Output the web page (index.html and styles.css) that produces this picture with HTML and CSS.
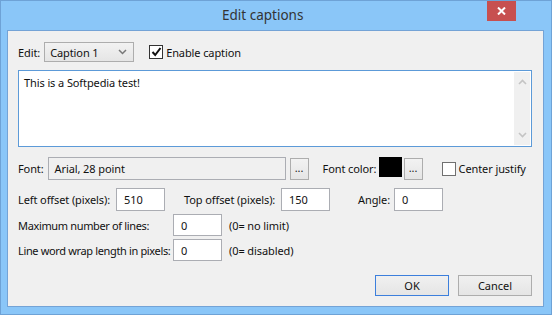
FILE: index.html
```html
<!DOCTYPE html>
<html lang="en">
<head>
  <meta charset="UTF-8">
  <title>Edit captions</title>
  <link rel="stylesheet" href="styles.css">
</head>
<body>
  <div class="window">
    <div class="titlebar">
      <span class="title">Edit captions</span>
      <span class="close">
        <svg width="9" height="8" viewBox="0 0 9 8"><path d="M1 0.5 L8 7.5 M8 0.5 L1 7.5" stroke="#fff" stroke-width="2"/></svg>
      </span>
    </div>

    <div class="client">
      <div class="row row-edit">
        <span class="lbl">Edit:</span>
        <div class="select">
          <span>Caption 1</span>
          <svg width="9" height="6" viewBox="0 0 9 6"><path d="M1 1 L4.5 4.5 L8 1" fill="none" stroke="#777" stroke-width="1.5"/></svg>
        </div>
        <span class="check checked">
          <svg width="11" height="10" viewBox="0 0 11 10"><path d="M1.5 5 L4.2 8 L9.5 1" fill="none" stroke="#111" stroke-width="2"/></svg>
        </span>
        <span class="lbl">Enable caption</span>
      </div>

      <div class="memo">
        <div class="memo-text">This is a Softpedia test!</div>
        <div class="scroll">
          <svg width="9" height="6" viewBox="0 0 9 6"><path d="M1 5 L4.5 1.5 L8 5" fill="none" stroke="#c4c4c4" stroke-width="1.6"/></svg>
          <svg width="9" height="6" viewBox="0 0 9 6"><path d="M1 1 L4.5 4.5 L8 1" fill="none" stroke="#c4c4c4" stroke-width="1.6"/></svg>
        </div>
      </div>

      <div class="row row-font">
        <span class="lbl">Font:</span>
        <div class="field readonly font-field">Arial, 28 point</div>
        <button class="dots">...</button>
        <span class="lbl color-lbl">Font color:</span>
        <span class="swatch"></span>
        <button class="dots">...</button>
        <span class="check unchecked"></span>
        <span class="lbl">Center justify</span>
      </div>

      <div class="row row-offset">
        <span class="lbl left-lbl">Left offset (pixels):</span>
        <div class="field num">510</div>
        <span class="lbl top-lbl">Top offset (pixels):</span>
        <div class="field num">150</div>
        <span class="lbl angle-lbl">Angle:</span>
        <div class="field num">0</div>
      </div>

      <div class="row row-lines">
        <span class="lbl wide">Maximum number of lines:</span>
        <div class="field num">0</div>
        <span class="lbl note">(0= no limit)</span>
      </div>

      <div class="row row-wrap">
        <span class="lbl wide">Line word wrap length in pixels:</span>
        <div class="field num">0</div>
        <span class="lbl note">(0= disabled)</span>
      </div>

      <div class="buttons">
        <button class="btn default">OK</button>
        <button class="btn">Cancel</button>
      </div>
    </div>
  </div>
</body>
</html>
```

FILE: styles.css
```css
body { margin: 0; background: #fff; font-family: "Noto Sans", "Open Sans", sans-serif; font-size: 11px; letter-spacing: -0.1px; color: #111; }
.window { width: 552px; height: 315px; box-sizing: border-box; background: #8ac6f8; border: 1px solid #6ea2d6; display: flex; flex-direction: column; }
.titlebar { height: 29px; display: flex; align-items: flex-start; }
.title { margin: 5px 0 0 221px; font-size: 13.5px; letter-spacing: 0; color: #333; }
.close { margin-left: auto; margin-right: 35px; width: 29px; height: 20px; background: #c75050; display: flex; align-items: center; justify-content: center; }

.client { flex: 1; margin: 0 7px 7px 6px; background: #f0f0f0; border: 1px solid #74a3d6; padding: 11px 0 0 10px; }
.row { display: flex; align-items: center; }
.lbl { white-space: nowrap; }

.row-edit { height: 20px; }
.select { margin-left: 4px; height: 18px; border: 1px solid #adadad; background: linear-gradient(#f2f2f2, #e5e5e5); display: flex; align-items: center; justify-content: space-between; padding: 0 6px 0 5px; width: 77px; }
.check { width: 12px; height: 12px; border: 1px solid #333; background: #fff; display: flex; align-items: center; justify-content: center; margin-right: 3px; }
.row-edit .check { margin-left: 15px; }
.unchecked { border-color: #707070; margin-left: 19px; }

.memo { margin-top: 8px; width: 512px; height: 75px; border: 1px solid #5c9ad8; background: #fff; display: flex; }
.memo-text { flex: 1; padding: 4px 5px; }
.scroll { width: 16px; margin: 1px 1px 1px 0; background: #f0f0f0; display: flex; flex-direction: column; justify-content: space-between; align-items: center; padding: 7px 0; box-sizing: border-box; }

.row-font { margin-top: 10px; height: 23px; }
.field { border: 1px solid #abadb3; background: #fff; display: flex; align-items: center; padding-left: 7px; box-sizing: border-box; height: 23px; }
.font-field { margin-left: 4px; width: 238px; padding-left: 6px; }
.readonly { background: #f0f0f0; }
.dots { margin-left: 4px; width: 19px; height: 22px; border: 1px solid #adadad; background: linear-gradient(#f2f2f2, #e5e5e5); font: inherit; padding: 0 0 4px; display: flex; align-items: flex-end; justify-content: center; color: #222; }
.color-lbl { margin-left: 14px; width: 52px; }
.swatch { margin-left: 4px; width: 23px; height: 20px; background: #000; align-self: flex-start; }
.swatch + .dots { margin-left: 2px; }

.row-offset { margin-top: 8px; }
.left-lbl { width: 94px; }
.num { width: 49px; }
.row-offset .num { margin-left: 4px; }
.top-lbl { margin-left: 19px; width: 93px; }
.angle-lbl { margin-left: 28px; width: 32px; }

.row-lines { margin-top: 3px; height: 22px; }
.row-wrap { margin-top: 3px; height: 22px; }
.wide { width: 155px; letter-spacing: -0.35px; }
.row-lines .field, .row-wrap .field { height: 22px; }
.note { margin-left: 7px; }

.buttons { display: flex; justify-content: flex-end; gap: 9px; margin: 14px 11px 0 0; }
.btn { width: 74px; height: 21px; font: inherit; color: #111; border: 1px solid #adadad; background: linear-gradient(#f0f0f0, #e5e5e5); padding: 0; }
.btn.default { border-color: #3c7fdc; }
```
